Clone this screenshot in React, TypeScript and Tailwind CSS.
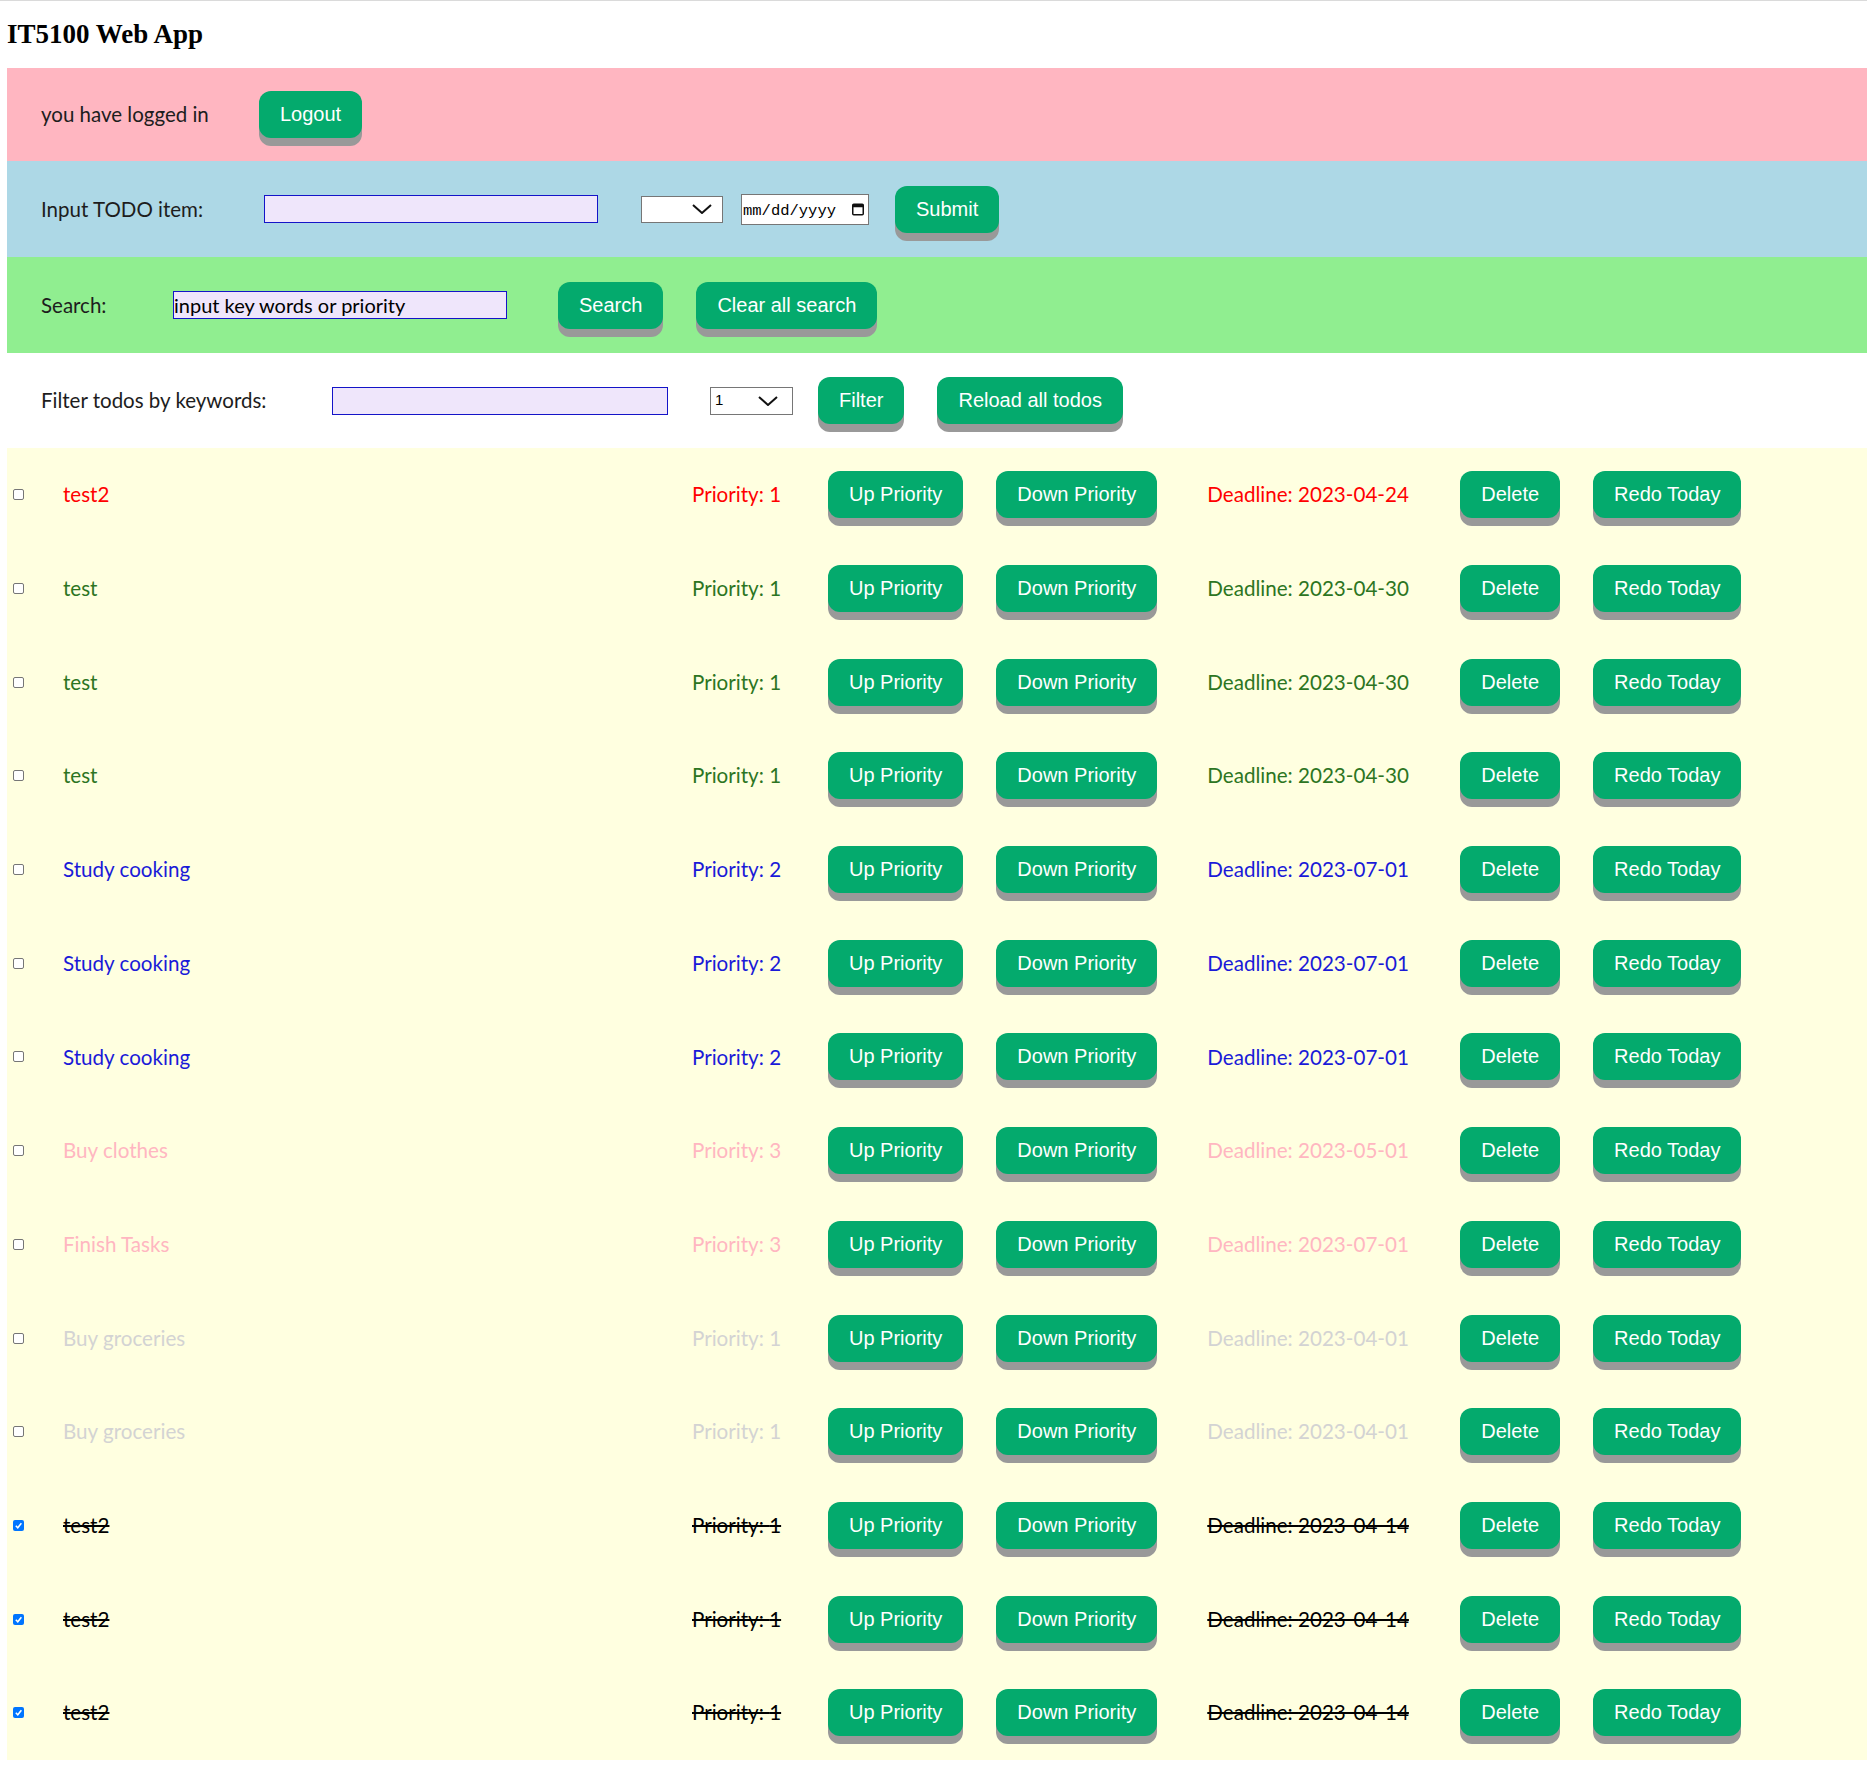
import React from 'react';

type Todo = {
    title: string;
    priority: number;
    deadline: string;
    tone: string;
    done: boolean;
};

const todos: Todo[] = [
    { title: 'test2', priority: 1, deadline: '2023-04-24', tone: 'text-[#ff0000]', done: false },
    { title: 'test', priority: 1, deadline: '2023-04-30', tone: 'text-[#2c7522]', done: false },
    { title: 'test', priority: 1, deadline: '2023-04-30', tone: 'text-[#2c7522]', done: false },
    { title: 'test', priority: 1, deadline: '2023-04-30', tone: 'text-[#2c7522]', done: false },
    { title: 'Study cooking', priority: 2, deadline: '2023-07-01', tone: 'text-[#1a1ad8]', done: false },
    { title: 'Study cooking', priority: 2, deadline: '2023-07-01', tone: 'text-[#1a1ad8]', done: false },
    { title: 'Study cooking', priority: 2, deadline: '2023-07-01', tone: 'text-[#1a1ad8]', done: false },
    { title: 'Buy clothes', priority: 3, deadline: '2023-05-01', tone: 'text-[#ffb6c1]', done: false },
    { title: 'Finish Tasks', priority: 3, deadline: '2023-07-01', tone: 'text-[#ffb6c1]', done: false },
    { title: 'Buy groceries', priority: 1, deadline: '2023-04-01', tone: 'text-[#d3d3d3]', done: false },
    { title: 'Buy groceries', priority: 1, deadline: '2023-04-01', tone: 'text-[#d3d3d3]', done: false },
    { title: 'test2', priority: 1, deadline: '2023-04-14', tone: 'text-black line-through', done: true },
    { title: 'test2', priority: 1, deadline: '2023-04-14', tone: 'text-black line-through', done: true },
    { title: 'test2', priority: 1, deadline: '2023-04-14', tone: 'text-black line-through', done: true },
];

const Btn = ({ children, className = '' }: { children: React.ReactNode; className?: string }) => (
    <button
        className={`shrink-0 rounded-[12px] bg-[#04aa6d] px-[21px] py-[12px] font-['Liberation_Sans',Arial,sans-serif] text-[20px] leading-[23px] text-white shadow-[0_8px_0_#999] ${className}`}
    >
        {children}
    </button>
);

const Chevron = () => (
    <svg width="20" height="10" viewBox="0 0 20 10">
        <path d="M1 1 L10 9 L19 1" fill="none" stroke="#111" strokeWidth="2" />
    </svg>
);

const CheckBox = ({ checked }: { checked: boolean }) =>
    checked ? (
        <span className="ml-[6px] flex h-[11px] w-[11px] shrink-0 items-center justify-center rounded-[2px] bg-[#0075ff]">
            <svg width="9" height="9" viewBox="0 0 10 10">
                <path d="M2 5.3 L4.2 7.5 L8.2 2.4" fill="none" stroke="white" strokeWidth="1.7" />
            </svg>
        </span>
    ) : (
        <span className="ml-[6px] h-[11px] w-[11px] shrink-0 rounded-[2px] border border-[#767676] bg-white" />
    );

const label = "shrink-0 font-['Lato',sans-serif] text-[20.5px] text-[#1d1d1d]";
const textBox = "h-[28px] w-[334px] shrink-0 border border-[#1414c8] bg-[#efe6fb] font-['Lato',sans-serif] text-[20px] text-black outline-none";
const cell = "shrink-0 font-['Lato',sans-serif] text-[20.6px]";

export default function App() {
    return (
        <div className="min-h-screen border-t border-[#dadada] bg-white">
            <div className="pl-[7px]">
                <h1 className="pt-[18px] pb-[19px] font-['Liberation_Serif',serif] text-[27px] font-bold leading-[30px] text-black">
                    IT5100 Web App
                </h1>

                {/* logged in bar */}
                <div className="flex h-[93px] items-center bg-[#ffb6c1] pl-[34px]">
                    <span className={`${label} w-[218px]`}>you have logged in</span>
                    <Btn>Logout</Btn>
                </div>

                {/* new todo */}
                <div className="flex h-[96px] items-center bg-[#add8e6] pl-[34px]">
                    <span className={`${label} w-[223px]`}>Input TODO item:</span>
                    <input className={textBox} />
                    <div className="ml-[43px] flex h-[27px] w-[82px] shrink-0 items-center justify-end border border-[#767676] bg-white pr-[10px]">
                        <Chevron />
                    </div>
                    <div className="ml-[18px] flex h-[31px] w-[128px] shrink-0 items-center justify-between border border-[#767676] bg-white pl-[1px] pr-[3px]">
                        <span className="pt-[3px] font-['Liberation_Mono',monospace] text-[15.5px] leading-[20px] text-black">mm/dd/yyyy</span>
                        <svg width="14" height="14" viewBox="0 0 14 14">
                            <rect x="1.75" y="2.25" width="10.5" height="10.5" rx="1" fill="none" stroke="#111" strokeWidth="1.5" />
                            <rect x="1.75" y="2.25" width="10.5" height="3" fill="#111" />
                        </svg>
                    </div>
                    <Btn className="ml-[26px]">Submit</Btn>
                </div>

                {/* search */}
                <div className="flex h-[96px] items-center bg-[#90ee90] pl-[34px]">
                    <span className={`${label} w-[132px]`}>Search:</span>
                    <input className={textBox} readOnly value="input key words or priority" />
                    <Btn className="ml-[51px]">Search</Btn>
                    <Btn className="ml-[33px]">Clear all search</Btn>
                </div>

                {/* filter */}
                <div className="flex h-[95px] items-center bg-white pl-[34px]">
                    <span className={`${label} w-[291px]`}>Filter todos by keywords:</span>
                    <input className={`${textBox} w-[336px]`} />
                    <div className="ml-[42px] flex h-[28px] w-[83px] shrink-0 items-center justify-between border border-[#767676] bg-white pl-[4px] pr-[14px]">
                        <span className="font-['Liberation_Sans',Arial,sans-serif] text-[15px] text-black">1</span>
                        <Chevron />
                    </div>
                    <Btn className="ml-[25px]">Filter</Btn>
                    <Btn className="ml-[33px]">Reload all todos</Btn>
                </div>

                {/* todo list */}
                <div className="bg-[#ffffe0]">
                    {todos.map((t, i) => (
                        <div key={i} className="flex h-[93.7px] items-center">
                            <CheckBox checked={t.done} />
                            <span className={`${cell} ml-[39px] w-[629px] ${t.tone}`}>{t.title}</span>
                            <span className={`${cell} w-[136px] ${t.tone}`}>Priority: {t.priority}</span>
                            <Btn>Up Priority</Btn>
                            <Btn className="ml-[33px]">Down Priority</Btn>
                            <span className={`${cell} ml-[50px] w-[253px] ${t.tone}`}>Deadline: {t.deadline}</span>
                            <Btn>Delete</Btn>
                            <Btn className="ml-[33px]">Redo Today</Btn>
                        </div>
                    ))}
                </div>
            </div>
        </div>
    );
}
